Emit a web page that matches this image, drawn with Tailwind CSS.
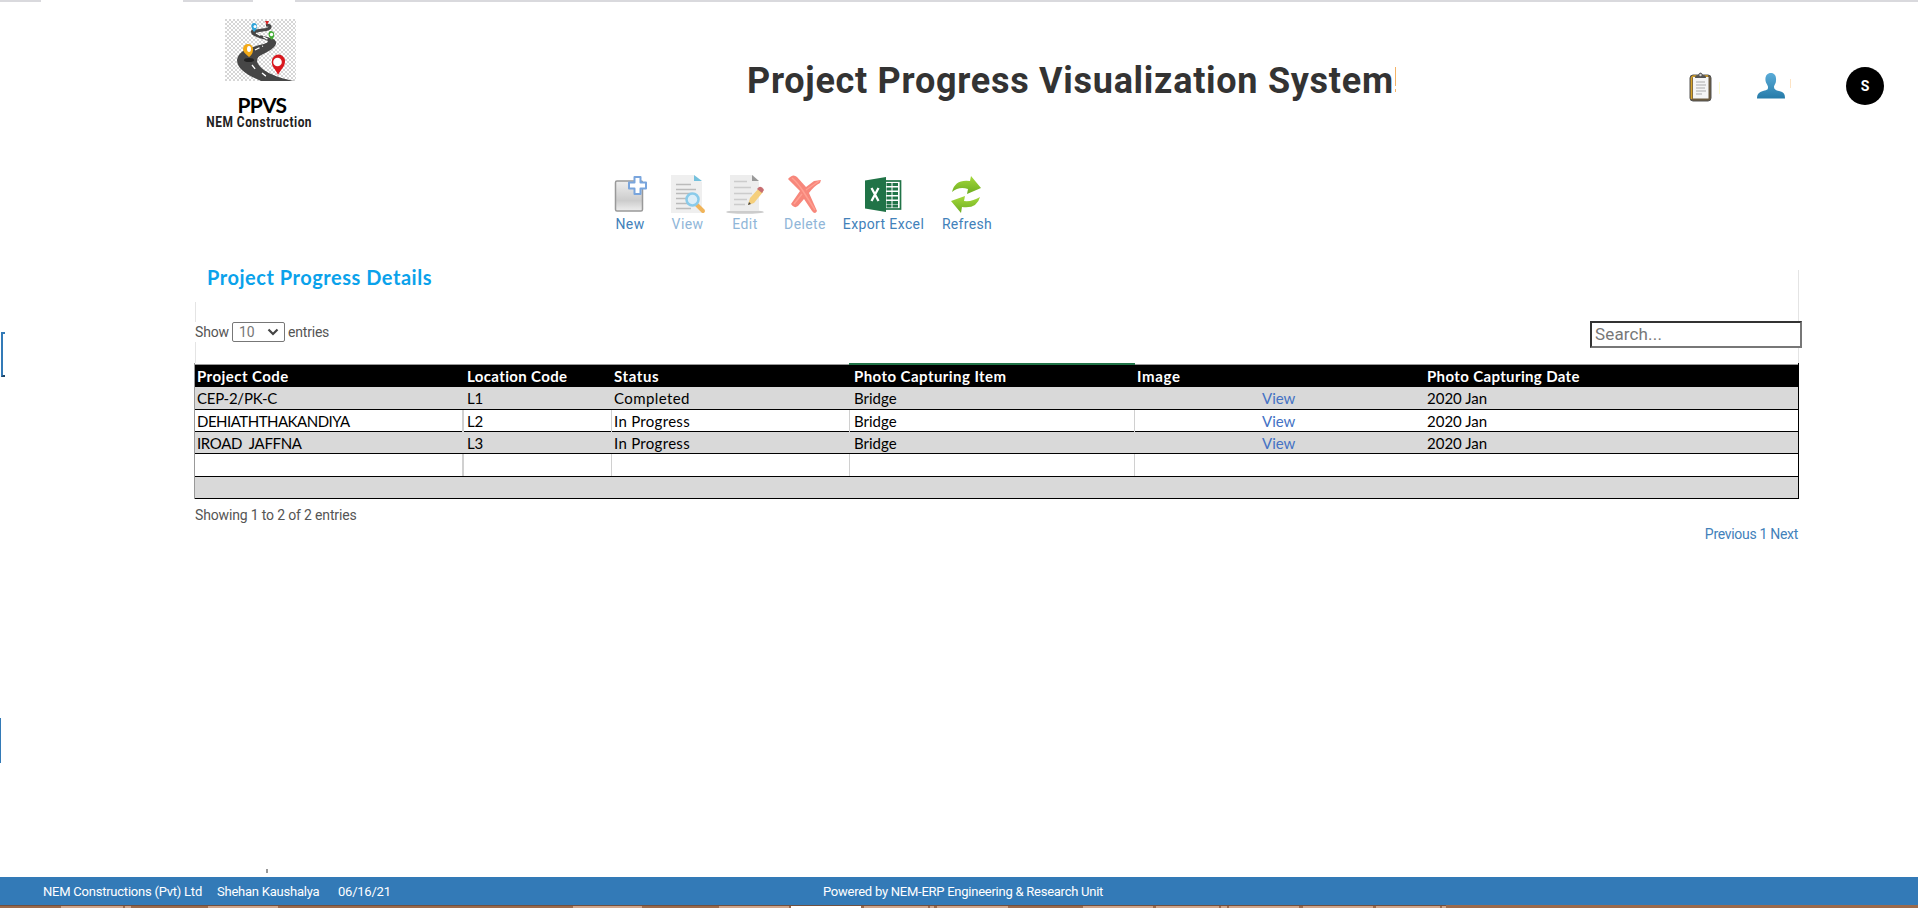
<!DOCTYPE html>
<html lang="en">
<head>
<meta charset="utf-8">
<title>Project Progress Visualization System</title>
<script src="https://cdn.jsdelivr.net/npm/@tailwindcss/browser@4"></script>
</head>
<body class="w-[1918px] h-[908px] overflow-hidden bg-white font-['Roboto',sans-serif] text-[14px] text-[#555] flex flex-col relative whitespace-nowrap">
<div class="flex h-[2px] shrink-0">
  <div class="w-[41px] bg-[#d9d9dd]"></div><div class="w-[142px]"></div><div class="w-[70px] bg-[#d9d9dd]"></div><div class="w-[42px]"></div><div class="flex-1 bg-[#d9d9dd]"></div>
</div>

<header class="flex h-[166px] shrink-0">
  <div class="w-[120px] ml-[199px] pt-[17px] flex flex-col items-center">
    <svg class="block ml-[3px]" width="71" height="62" viewBox="0 0 71 62">
      <defs><pattern id="chk" width="4" height="4" patternUnits="userSpaceOnUse"><rect width="4" height="4" fill="#fff"/><rect width="2" height="2" fill="#d6d6d6"/><rect x="2" y="2" width="2" height="2" fill="#d6d6d6"/></pattern></defs>
      <rect width="71" height="62" fill="url(#chk)"/>
      <path d="M41 6C46 6 47 9 41 10.500L31 12" fill="none" stroke="#484848" stroke-width="3"/>
      <path d="M26 12C27 10 33 10 32 13C34 17 40 17 45 19C52 20 53 25 48 29C42 35 32 35 32 42C34 51 49 58 69 62H36C22 56 12 50 12 41C13 33 21 30 28 28C36 25 43 25 43 22C37 19 25 18 26 12Z" fill="#464646"/>
      <path d="M31 14L44 21M30 31L38 27M27 46L31 51M37 54L42 58" fill="none" stroke="#fff" stroke-width="1.300" stroke-dasharray="5 3"/>
      <path d="M29 13C25 8 26 4 29 4S34 8 29 13Z" fill="#2ea3d8"/><circle cx="30" cy="7.500" r="1.500" fill="#fff"/>
      <path d="M42 6L40 2H44Z" fill="#d22"/>
      <path d="M47 21C42 17 43 12 46 12S51 16 47 21Z" fill="#43ac35"/><circle cx="46.500" cy="15.500" r="1.700" fill="#fff"/>
      <ellipse cx="24" cy="41" rx="5" ry="2" fill="#222"/>
      <path d="M24 38C19 34 18 32 18 30A5 5 0 0 1 28 30C28 32 28 35 24 38Z" fill="#f4aa16"/><ellipse cx="24" cy="30" rx="2" ry="3" fill="#fff"/>
      <path d="M53 56C51 50 46 48 47 42A6.500 6.500 0 0 1 60 42C60 48 56 50 53 56Z" fill="#d9181e"/><circle cx="52.500" cy="43" r="4.300" fill="#fff"/>
    </svg>
    <div class="mt-[13px] ml-[6px] h-[21px] leading-[21px] font-['Lato',sans-serif] font-bold text-[21px] tracking-[-0.6px] text-black">PPVS</div>
    <div class="h-[14px] leading-[14px] font-bold text-[14px] tracking-[0.6px] scale-x-[.85] text-[#222]">NEM Construction</div>
  </div>
  <h1 class="ml-[428px] pt-[56px] w-[649px] leading-[46px] h-[110px] font-bold text-[36px] tracking-[0.72px] text-[#333]">Project Progress Visualization System</h1>
  <svg class="ml-[292px] mt-[69px]" width="26" height="32" viewBox="0 0 26 32">
    <rect x="2" y="4" width="21" height="26" rx="3" fill="#6b5a3e" stroke="#555" stroke-width="1"/>
    <path d="M3.500 28V7Q4 5 6 5H20" fill="none" stroke="#d9a428" stroke-width="1.500"/>
    <rect x="5" y="6" width="15.500" height="21.500" fill="#f5f5f5"/>
    <path d="M7 7Q7 4 10 4Q12.500 -1 15 4Q18 4 18 7Z" fill="#555"/><circle cx="12.500" cy="4" r="1.200" fill="#ccc"/>
    <path d="M8 11H17M8 14H18M8 17H17M8 20H18M8 23H14" stroke="#d0d0d0" stroke-width="2.200"/>
  </svg>
  <div class="ml-[5px] mt-[80px] w-px h-[12px] bg-[#fffbd0]"></div>
  <svg class="ml-[36px] mt-[70px]" width="31" height="30" viewBox="0 0 31 30">
    <defs><linearGradient id="usr" x2="0" y2="1"><stop stop-color="#5bacd8"/><stop offset="1" stop-color="#267ba9"/></linearGradient></defs>
    <path d="M15 1C18.500 1 20.500 4 20 8.500C20 12 18 13 18 15Q18 18 23 19C28 20 29 22 29 26.500H1C1 22 3 20 7 19C12 18 12 17 12 15C12 13 10 12 9.500 8.500C9 4 11 1 15 1Z" fill="url(#usr)"/>
  </svg>
  <div class="ml-[3px] mt-[77px] w-px h-[9px] bg-[#fde3c4]"></div>
  <div class="ml-[55px] mt-[65px] size-[38px] rounded-full bg-black text-white font-bold text-[14px] flex items-center justify-center">S</div>
</header>

<nav class="flex h-[102px] shrink-0 ml-[606px] pt-[5px] text-[#4281ba]">
  <div class="w-[48px] flex flex-col items-center">
    <svg class="relative -left-px" width="38" height="42" viewBox="0 0 38 42"><defs><linearGradient id="g1" x2="0" y2="1"><stop stop-color="#eee"/><stop offset=".65" stop-color="#ccc"/><stop offset="1" stop-color="#eee"/></linearGradient></defs><rect x="5.500" y="8" width="27" height="30" rx="1.500" fill="url(#g1)" stroke="#999" stroke-width="1.500"/><path d="M24.500 4h6v5.500h5.500v6h-5.500v5.500h-6v-5.500h-5.500v-6h5.500z" fill="#fff" stroke="#79a5dd" stroke-width="2" stroke-linejoin="round"/></svg>
    <div class="h-[18px] leading-[18px] tracking-[0.4px]">New</div>
  </div>
  <div class="w-[66px] flex flex-col items-center">
    <svg width="38" height="42" viewBox="0 0 38 42"><path d="M3 2H26L34 9V40H3Z" fill="#efefef"/><path d="M26 2V8H34Z" fill="#75c1dd"/><path d="M8 11.500H23M8 16.500H28M8 20.500H24M8 25.500H20M8 30.500H20M8 35.500H23" stroke="#bbb" stroke-width="1.300"/><path d="M29 32L35 38" stroke="#f0b45a" stroke-width="4" stroke-linecap="round"/><circle cx="24.500" cy="26.500" r="6" fill="#dceef8" stroke="#8acbea" stroke-width="2.500"/></svg>
    <div class="ml-px h-[18px] leading-[18px] tracking-[0.4px] text-[#90b6d8]">View</div>
  </div>
  <div class="w-[50px] flex flex-col items-center">
    <svg width="40" height="42" viewBox="0 0 40 42"><ellipse cx="20" cy="39" rx="19" ry="1.800" fill="#ccc"/><path d="M5 2H28L34 9V38H5Z" fill="#ededed"/><path d="M27 2V8H34Z" fill="#999"/><path d="M9 8.500H22M9 14.500H26M9 20.500H27M9 26.500H22M9 31.500H20" stroke="#ccc" stroke-width="1.300"/><path d="M23 32L25 25L34 15L38 19L29 30Z" fill="#f5cf7c"/><path d="M32 16L34 14Q37 13 39 17L37 20Z" fill="#c76d70"/><path d="M23 32L24 29L26 31Z" fill="#444"/></svg>
    <div class="h-[18px] leading-[18px] tracking-[0.5px] text-[#90b6d8]">Edit</div>
  </div>
  <div class="w-[70px] flex flex-col items-center">
    <svg width="38" height="42" viewBox="0 0 38 42"><path d="M2 6Q7 0 11 4L20 14L28 8L35 7L34 10Q28 13 23 20L31 38Q29 42 26 38L18 26L12 33Q8 36 5 31L14 18Z" fill="#f7877b"/><path d="M6 5Q11 9 17 18L29 37M20 17L33 8M8 31L16 21" fill="none" stroke="#ff9f91" stroke-width="1.500"/></svg>
    <div class="h-[18px] leading-[18px] tracking-[0.4px] text-[#90b6d8]">Delete</div>
  </div>
  <div class="w-[87px] flex flex-col items-center">
    <svg class="relative -left-px" width="38" height="42" viewBox="0 0 38 42"><rect x="20" y="8" width="16.500" height="28" fill="#fff" stroke="#207347" stroke-width="1.700"/><path d="M21 11.500H34M21 16H34M21 20.500H34M21 25H34M21 29.500H34M21 33H34" stroke="#207347" stroke-width="2.800"/><path d="M22 10V35M28 10V35" stroke="#fff" stroke-width="1"/><path d="M1 7.500L22 4V39L1 35.500Z" fill="#207347"/><path d="M7.500 15L14.500 28M14.500 15L7.500 28" stroke="#fff" stroke-width="2.300"/></svg>
    <div class="h-[18px] leading-[18px] tracking-[0.38px]">Export Excel</div>
  </div>
  <div class="w-[80px] flex flex-col items-center">
    <svg class="relative -left-px" width="38" height="42" viewBox="0 0 38 42"><defs><linearGradient id="g2" x2="0" y2="1"><stop stop-color="#a5d93b"/><stop offset="1" stop-color="#6dad20"/></linearGradient></defs><path d="M5 19Q8 6 23 8L24 3L34 15L20 21L21 16Q12 13 5 19Z" fill="url(#g2)"/><path d="M33 24Q30 36 15 34L14 40L4 28L18 23L17 28Q25 29 33 24Z" fill="url(#g2)"/></svg>
    <div class="h-[18px] leading-[18px] tracking-[0.33px]">Refresh</div>
  </div>
</nav>

<main class="ml-[194px] w-[1609px] flex flex-col">
  <div class="flex h-[93px]">
    <div class="w-[400px] flex flex-col">
      <h2 class="ml-[13px] h-[32px] leading-[14px] font-['Lato',sans-serif] font-bold text-[20px] tracking-[0.53px] text-[#0aa2eb]">Project Progress Details</h2>
      <div class="ml-[1px] h-[20px] w-px bg-[#e4e4e4]"></div>
      <div class="ml-[1px] h-[20px] flex items-center">
        <span class="w-[37px] tracking-[-0.15px]">Show</span>
        <span class="w-[53px] h-[20px] border border-[#777] rounded-[2px] flex items-center justify-between pl-[6px] pr-[5px] text-[#777]"><span>10</span><svg width="12" height="8" viewBox="0 0 12 8"><path d="M1.500 1.500L6 6L10.500 1.500" fill="none" stroke="#444" stroke-width="2.200"/></svg></span>
        <span class="ml-[3px] tracking-[-0.2px]">entries</span>
      </div>
      <div class="ml-[1px] h-[21px] w-px bg-[#e4e4e4]"></div>
    </div>
    <div class="ml-auto w-[213px] flex flex-col">
      <div class="ml-[208px] w-px h-[51px] bg-[#e4e4e4]"></div>
      <div class="w-[212px] h-[27px] border-2 border-t-[#333] border-l-[#333] border-r-[#777] border-b-[#777] pl-[3px] text-[17px] leading-[22px] tracking-[0.15px] text-[#777]">Search...</div>
      <div class="ml-[208px] w-px h-[15px] bg-[#e4e4e4]"></div>
    </div>
  </div>

  <div class="w-[1605px] border-l border-l-[#999] border-r border-r-black font-['Lato',sans-serif] text-[15px] text-black">
    <div class="flex h-[2px]"><div class="w-[654px] border-b border-[#999]"></div><div class="w-[286px] bg-[#207347]"></div><div class="flex-1 border-b border-[#999]"></div></div>
    <div class="grid grid-cols-[269px_148px_238px_285px_288px_1fr] h-[22px] bg-black text-white font-bold leading-[23px] border-b border-black">
      <div class="pl-[2px] tracking-[0.45px]">Project Code</div><div class="pl-[3px] tracking-[0.36px]">Location Code</div><div class="pl-[2px] tracking-[0.6px]">Status</div><div class="pl-[4px] tracking-[0.44px]">Photo Capturing Item</div><div class="pl-[2px] tracking-[0.7px]">Image</div><div class="pl-[4px] tracking-[0.36px]">Photo Capturing Date</div>
    </div>
    <div class="grid grid-cols-[269px_148px_238px_285px_288px_1fr] h-[23px] bg-[#d9d9d9] leading-[23px] border-b border-black">
      <div class="pl-[2px] tracking-[-0.25px]">CEP-2/PK-C</div><div class="pl-[3px] tracking-[-0.3px]">L1</div><div class="pl-[2px] tracking-[0.4px]">Completed</div><div class="pl-[4px]">Bridge</div><div class="pl-[127px] text-[#4472c4]">View</div><div class="pl-[4px]">2020 Jan</div>
    </div>
    <div class="grid grid-cols-[269px_148px_238px_285px_288px_1fr] h-[22px] leading-[22px] border-b border-black">
      <div class="pl-[2px] border-r-2 border-[#d0d0d0] tracking-[-0.5px]">DEHIATHTHAKANDIYA</div><div class="pl-[3px] border-r border-[#d0d0d0] tracking-[-0.3px]">L2</div><div class="pl-[2px] border-r border-[#d0d0d0] tracking-[0.3px]">In Progress</div><div class="pl-[4px] border-r border-[#d0d0d0]">Bridge</div><div class="pl-[127px] text-[#4472c4]">View</div><div class="pl-[4px]">2020 Jan</div>
    </div>
    <div class="grid grid-cols-[269px_148px_238px_285px_288px_1fr] h-[22px] bg-[#d9d9d9] leading-[22px] border-b border-black">
      <div class="pl-[2px] whitespace-pre tracking-[-0.33px]">IROAD  JAFFNA</div><div class="pl-[3px] tracking-[-0.3px]">L3</div><div class="pl-[2px] tracking-[0.3px]">In Progress</div><div class="pl-[4px]">Bridge</div><div class="pl-[127px] text-[#4472c4]">View</div><div class="pl-[4px]">2020 Jan</div>
    </div>
    <div class="grid grid-cols-[269px_148px_238px_285px_288px_1fr] h-[23px] border-b border-black">
      <div class="border-r-2 border-[#d0d0d0]"></div><div class="border-r border-[#d0d0d0]"></div><div class="border-r border-[#d0d0d0]"></div><div class="border-r border-[#d0d0d0]"></div>
    </div>
    <div class="h-[22px] bg-[#d9d9d9] border-b border-black"></div>
  </div>
  <div class="ml-[1px] mt-[7px] h-[18px] leading-[18px] tracking-[-0.16px]">Showing 1 to 2 of 2 entries</div>
  <div class="w-[1604px] h-[18px] leading-[20px] text-right tracking-[-0.3px] text-[#4281ba]">Previous 1 Next</div>
</main>

<footer class="mt-auto shrink-0">
  <div class="ml-[266px] mb-[4px] w-[2px] h-[4px] bg-[#999]"></div>
  <div class="flex h-[28px] bg-[#337ab7] text-white text-[13px] leading-[29px] tracking-[-0.23px]">
    <div class="ml-[43px] w-[174px]">NEM Constructions (Pvt) Ltd</div><div class="w-[121px]">Shehan Kaushalya</div><div class="w-[485px]">06/16/21</div><div class="tracking-[-0.25px]">Powered by NEM-ERP Engineering &amp; Research Unit</div>
  </div>
  <svg class="block" width="1918" height="3" viewBox="0 0 1918 3"><rect width="1918" height="3" fill="#9b6a4b"/><rect width="1446" height="1" fill="#70503f"/><path d="M61 2H123M125 2H131M208 2H278M573 2H642M719 2H789M864 2H928M930 2H934M937 2H1008M1083 2H1153M1156 2H1219M1221 2H1227M1229 2H1299M1303 2H1373M1376 2H1440M1442 2H1446" stroke="#d0a68c" stroke-width="2"/><path d="M791 2H861" stroke="#fff" stroke-width="2"/></svg>
</footer>

<div class="absolute left-[1px] top-[332px] w-[4px] h-[45px] border-l-2 border-t-2 border-b-2 border-[#337ab7] border-b-[#1d4568]"></div>
<div class="absolute left-0 top-[718px] w-px h-[45px] bg-[#337ab7]"></div>
<div class="absolute left-[1395px] top-[67px] w-px h-[19px] bg-[#f5b366]"></div>
<div class="absolute left-[1395px] top-[89px] w-px h-[3px] bg-[#f5b366]"></div>
</body>
</html>
